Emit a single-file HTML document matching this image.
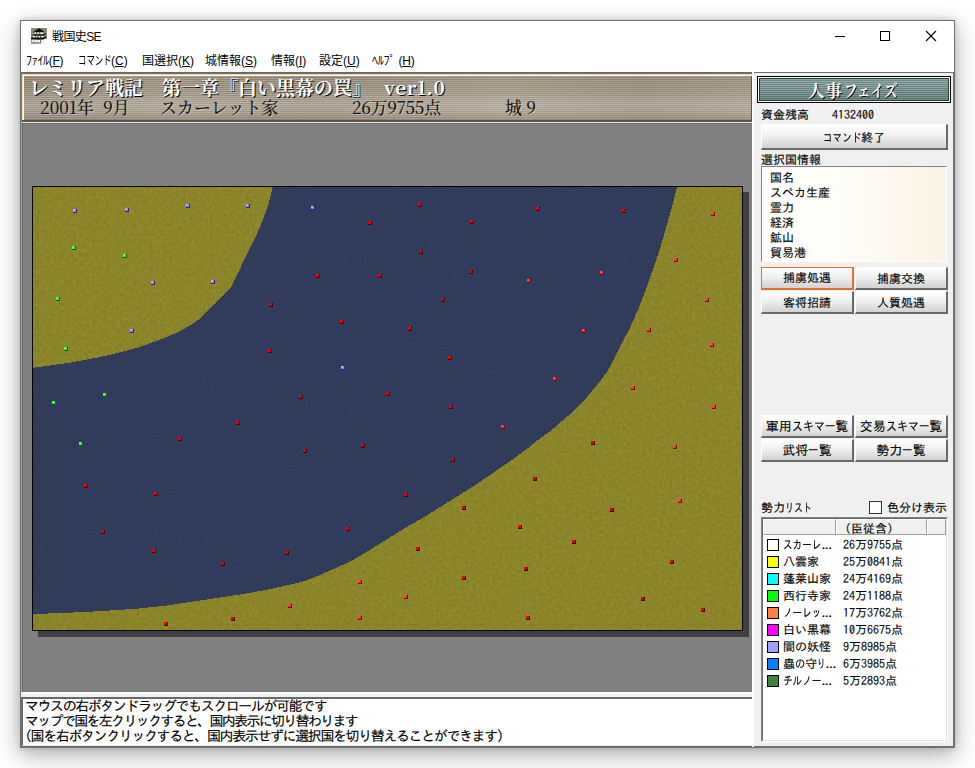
<!DOCTYPE html>
<html lang="ja">
<head>
<meta charset="utf-8">
<title>戦国史SE</title>
<style>
html,body{margin:0;padding:0;background:#fff;}
body{width:975px;height:768px;position:relative;overflow:hidden;font-family:"Liberation Sans","IPAGothic","Noto Sans CJK JP",sans-serif;font-size:12px;color:#000;}
.abs{position:absolute;white-space:nowrap;}
#win{position:absolute;left:20px;top:20px;width:935px;height:728px;background:#fff;box-sizing:border-box;
  box-shadow:0 0 0 1px rgba(90,90,90,0.0), 0 7px 22px 1px rgba(0,0,0,0.30), 0 0 7px rgba(0,0,0,0.16);}
#wborder{position:absolute;left:20px;top:20px;width:935px;height:728px;box-sizing:border-box;border:1px solid #707070;pointer-events:none;}
#title{left:52px;top:29px;letter-spacing:-0.6px;font-size:12px;line-height:16px;font-family:"Liberation Sans","Noto Sans CJK JP",sans-serif;}
.menu{top:53px;font-size:12px;line-height:16px;font-family:"Liberation Sans","Noto Sans CJK JP",sans-serif;}
.menu u{text-decoration:underline;text-underline-offset:1px;}
#client{position:absolute;left:21px;top:72px;width:933px;height:675px;background:#f0f0f0;box-sizing:border-box;border-top:1px solid #6e6e6e;border-right:1px solid #6e6e6e;border-bottom:1px solid #6e6e6e;}
#grey{position:absolute;left:21px;top:123px;width:731px;height:569px;background:#808080;box-sizing:border-box;border-top:1px solid #6e6e6e;border-left:1px solid #a0a0a0;box-shadow:inset 1px 0 0 #696969;}
#hdr{position:absolute;left:21px;top:72px;width:732px;height:51px;box-sizing:border-box;overflow:hidden;
  border-top:2px solid #6e6a66;border-bottom:1px solid #e4e4e4;border-left:1px solid #8a8070;background:#5c5248;}
#hdr .tex{position:absolute;left:2px;top:2px;right:2px;height:44px;
  background:linear-gradient(to bottom,rgba(80,60,40,0.10) 0%,rgba(80,60,40,0.04) 35%,rgba(255,255,250,0.14) 62%,rgba(255,255,250,0.10) 80%,rgba(60,40,30,0.12) 100%),
  linear-gradient(to right,rgba(255,250,240,0) 0%,rgba(255,250,240,0.10) 20%,rgba(255,250,240,0.02) 38%,rgba(255,250,240,0.14) 66%,rgba(255,250,240,0.03) 85%,rgba(255,250,240,0.10) 100%),
  repeating-linear-gradient(to bottom,#aea292 0,#aea292 1px,#8f8575 1px,#8f8575 2px);}
#hdr .hl{position:absolute;left:0;top:0;right:0;height:2px;background:linear-gradient(to bottom,#f3d9b3 0,#f3d9b3 1px,#fff6ea 1px,#fff6ea 2px);}
#hdr .hl2{position:absolute;left:0;top:0;width:2px;height:46px;background:linear-gradient(to right,#f3d9b3 0,#f3d9b3 1px,#fff6ea 1px,#fff6ea 2px);}
#hdr .l1{left:7px;top:2px;font-family:"Noto Serif CJK JP","Noto Serif CJK SC",serif;font-weight:700;font-size:19px;line-height:22px;color:#fff;text-shadow:1px 1px 0 #000;}
#hdr .l2{top:23px;font-family:"Noto Serif CJK JP","Noto Serif CJK SC",serif;font-weight:500;font-size:17px;line-height:20px;color:#141210;text-shadow:1px 1px 0 rgba(255,240,220,0.35);}
#mapbox{position:absolute;left:32px;top:186px;width:711px;height:445px;box-sizing:border-box;border:1px solid #000;box-shadow:6px 6px 0 #404040;background:#8a8626;}
#mapbox svg{display:block;}
#msg{position:absolute;left:21px;top:697px;width:732px;height:49px;box-sizing:border-box;background:#fff;border-top:2px solid #696969;border-left:2px solid #696969;border-bottom:1px solid #e3e3e3;border-right:1px solid #e3e3e3;}
#msg div{left:2px;font-family:"IPAGothic","Noto Sans CJK JP",sans-serif;font-size:14px;line-height:15px;}
.g,.btn,#msg div{-webkit-text-stroke:0.12px #000;}
.g{font-family:"IPAGothic","Noto Sans CJK JP",sans-serif;font-size:12px;line-height:13px;}
.btn{position:absolute;box-sizing:border-box;background:linear-gradient(to bottom,#ffffff 0%,#f0f0f0 45%,#d2d2d2 100%);
  border-top:1px solid #fff;border-left:1px solid #fff;border-right:2px solid #696969;border-bottom:2px solid #696969;
  text-align:center;font-family:"IPAGothic","Noto Sans CJK JP",sans-serif;font-size:13px;white-space:nowrap;}
.btn.sm{font-size:12px;}
.btn.foc{border:1px solid #e07030;border-right:2px solid #e07030;border-bottom:2px solid #e07030;}
.ph{font-family:"Noto Serif CJK JP","Noto Serif CJK SC",serif;font-weight:700;font-size:17px;line-height:21px;color:#fff;text-shadow:1px 1px 0 #000;}
.hc{position:absolute;top:1px;height:16px;box-sizing:border-box;background:#f0f0f0;border-top:1px solid #fff;border-left:1px solid #fff;border-right:1px solid #a0a0a0;border-bottom:1px solid #a0a0a0;}
.sq{position:absolute;left:5px;width:12px;height:12px;box-sizing:border-box;border:1px solid #000;}
.k{display:inline-block;transform-origin:0 50%;}
</style>
</head>
<body>
<div id="win"></div>
<!-- title bar -->
<svg class="abs" style="left:31px;top:28px" width="16" height="16" viewBox="0 0 16 16">
<defs><linearGradient id="ig" x1="0" y1="0" x2="1" y2="0"><stop offset="0" stop-color="#9c9c9c"/><stop offset="0.55" stop-color="#e6e6e6"/><stop offset="1" stop-color="#ffffff"/></linearGradient>
<linearGradient id="ig2" x1="0" y1="0" x2="1" y2="1"><stop offset="0" stop-color="#8c8474"/><stop offset="0.7" stop-color="#8c8474"/><stop offset="1" stop-color="#d8d4cc"/></linearGradient></defs>
<rect width="16" height="16" fill="url(#ig2)"/>
<rect x="0" y="11" width="16" height="5" fill="url(#ig)"/>
<polygon points="8.4,0.2 13,3.6 12.6,4.4 3,4.4 2.8,3.6" fill="#0c0c0c"/>
<rect x="3.4" y="4.4" width="8.8" height="1.9" fill="#f2f2f2"/>
<rect x="5.4" y="4.4" width="0.8" height="1.9" fill="#333"/><rect x="8.3" y="4.4" width="0.8" height="1.9" fill="#333"/>
<polygon points="1.8,7.7 2,6.7 3.6,6.2 12.2,6.2 14.8,5 14.4,6.6 12.2,7.9" fill="#0c0c0c"/>
<rect x="2" y="7.8" width="10.6" height="2" fill="#f2f2f2"/>
<rect x="4.3" y="7.8" width="0.7" height="2" fill="#333"/><rect x="6.4" y="7.8" width="0.9" height="2" fill="#222"/><rect x="9" y="7.8" width="0.8" height="2" fill="#333"/>
<polygon points="0,11.2 0,9.8 1.6,9.4 12.6,9.6 15.8,8 15.2,9.8 12.4,11.6 6,11.8" fill="#0c0c0c"/>
<rect x="1" y="11.8" width="1.6" height="2" fill="#f4f4f4"/><rect x="3.4" y="11.8" width="2.4" height="2" fill="#f4f4f4"/><rect x="6.8" y="12" width="2.4" height="1.8" fill="#fafafa"/>
<rect x="0" y="14" width="10" height="2" fill="#8e8e8e" opacity="0.7"/>
<rect x="9.4" y="11.6" width="0.6" height="3" fill="#222"/>
</svg>
<div id="title" class="abs">戦国史SE</div>
<svg class="abs" style="left:830px;top:26px" width="112" height="20" viewBox="0 0 112 20" shape-rendering="crispEdges">
<rect x="5" y="10" width="10" height="1" fill="#000"/>
<rect x="50.5" y="5.5" width="9" height="9" fill="none" stroke="#000" stroke-width="1"/>
<g shape-rendering="auto" stroke="#000" stroke-width="1.1"><line x1="96" y1="5" x2="106" y2="15"/><line x1="106" y1="5" x2="96" y2="15"/></g>
</svg>
<!-- menu -->
<div class="abs menu" style="left:26px;letter-spacing:-0.3px">ﾌｧｲﾙ(<u>F</u>)</div>
<div class="abs menu" style="left:78px"><span style="display:inline-block;transform:scaleX(0.70);transform-origin:0 50%;">コマンド</span></div><div class="abs menu" style="left:111px">(<u>C</u>)</div>
<div class="abs menu" style="left:142px">国選択(<u>K</u>)</div>
<div class="abs menu" style="left:205px">城情報(<u>S</u>)</div>
<div class="abs menu" style="left:271px">情報(<u>I</u>)</div>
<div class="abs menu" style="left:319px">設定(<u>U</u>)</div>
<div class="abs menu" style="left:372px;letter-spacing:-0.2px">ﾍﾙﾌﾟ (<u>H</u>)</div>

<div id="client"></div>
<div id="grey"></div><div class="abs" style="left:21px;top:692px;width:733px;height:2px;background:#fafafa"></div>
<div id="hdr"><div class="tex"></div><div class="hl"></div><div class="hl2"></div>
  <div class="abs l1">レミリア戦記　第一章『白い黒幕の罠』</div><div class="abs l1" style="left:362px;letter-spacing:0.7px">ver1.0</div>
  <div class="abs l2" style="left:18px">2001年</div><div class="abs l2" style="left:81px">9月</div>
  <div class="abs l2" style="left:138px">スカーレット家</div>
  <div class="abs l2" style="left:330px;letter-spacing:-0.4px">26万9755点</div>
  <div class="abs l2" style="left:483px">城 9</div>
</div>
<div id="mapbox"><svg class="map" width="709" height="443" viewBox="0 0 709 443" shape-rendering="crispEdges">
<defs>
<filter id="nz" color-interpolation-filters="sRGB" x="0" y="0" width="100%" height="100%"><feTurbulence type="fractalNoise" baseFrequency="0.55" numOctaves="1" seed="3" result="t"/><feColorMatrix in="t" type="matrix" values="0 0 0 0 0.36  0 0 0 0 0.55  0 0 0 0 0.20  5 0 0 0 -3.15"/></filter>
<filter id="nz2" color-interpolation-filters="sRGB" x="0" y="0" width="100%" height="100%"><feTurbulence type="fractalNoise" baseFrequency="0.45" numOctaves="2" seed="8" result="t"/><feColorMatrix in="t" type="matrix" values="0 0 0 0 1  0 0 0 0 1  0 0 0 0 1  1.2 0 0 0 -0.5"/></filter>
<filter id="nz3" color-interpolation-filters="sRGB" x="0" y="0" width="100%" height="100%"><feTurbulence type="fractalNoise" baseFrequency="0.32" numOctaves="2" seed="11" result="t"/><feColorMatrix in="t" type="matrix" values="0 0 0 0 0.68  0 0 0 0 0.62  0 0 0 0 0.24  0 2.2 0 0 -0.85"/></filter>
<filter id="nz4" color-interpolation-filters="sRGB" x="0" y="0" width="100%" height="100%"><feTurbulence type="fractalNoise" baseFrequency="0.3" numOctaves="2" seed="29" result="t"/><feColorMatrix in="t" type="matrix" values="0 0 0 0 0.45  0 0 0 0 0.38  0 0 0 0 0.10  0 0 2.2 0 -0.85"/></filter>
<clipPath id="sea"><polygon points="239.9,0.0 235.1,18.8 228.7,36.0 221.2,53.1 213.6,68.2 205.1,85.4 197.5,101.5 185.7,113.3 175.0,124.0 164.2,133.7 157.0,138.6 144.7,145.2 131.6,150.9 118.4,155.8 105.3,160.4 92.2,164.0 79.0,167.3 65.9,170.3 52.8,172.7 39.7,175.2 26.5,177.2 13.4,179.1 0.0,180.8 0.0,427.0 23.7,426.2 50.3,425.1 77.0,423.5 103.7,421.7 130.3,419.0 157.0,415.0 183.7,411.0 210.3,407.0 237.0,402.2 257.0,397.7 270.0,394.5 283.1,389.6 296.2,383.9 309.4,378.1 320.8,372.4 332.3,365.8 345.5,357.6 358.6,349.4 371.7,341.2 376.8,338.2 390.0,330.8 403.1,322.6 416.2,314.4 429.4,306.2 442.5,298.0 455.6,288.9 468.7,279.9 481.9,270.9 495.0,261.0 506.5,251.8 518.3,243.3 529.8,233.4 540.5,224.4 549.5,215.4 557.7,205.5 565.9,195.7 574.1,185.0 579.9,174.3 585.6,162.8 588.8,156.5 596.8,141.2 605.4,121.9 612.9,102.5 620.4,81.1 626.9,61.7 633.3,40.2 638.7,20.9 644.1,0.0"/></clipPath>
</defs>
<rect width="709" height="443" fill="#8c8629"/>
<rect width="709" height="443" filter="url(#nz3)" opacity="0.32"/><rect width="709" height="443" filter="url(#nz4)" opacity="0.30"/><rect width="709" height="443" filter="url(#nz)" opacity="0.6"/>
<polygon points="239.9,0.0 235.1,18.8 228.7,36.0 221.2,53.1 213.6,68.2 205.1,85.4 197.5,101.5 185.7,113.3 175.0,124.0 164.2,133.7 157.0,138.6 144.7,145.2 131.6,150.9 118.4,155.8 105.3,160.4 92.2,164.0 79.0,167.3 65.9,170.3 52.8,172.7 39.7,175.2 26.5,177.2 13.4,179.1 0.0,180.8 0.0,427.0 23.7,426.2 50.3,425.1 77.0,423.5 103.7,421.7 130.3,419.0 157.0,415.0 183.7,411.0 210.3,407.0 237.0,402.2 257.0,397.7 270.0,394.5 283.1,389.6 296.2,383.9 309.4,378.1 320.8,372.4 332.3,365.8 345.5,357.6 358.6,349.4 371.7,341.2 376.8,338.2 390.0,330.8 403.1,322.6 416.2,314.4 429.4,306.2 442.5,298.0 455.6,288.9 468.7,279.9 481.9,270.9 495.0,261.0 506.5,251.8 518.3,243.3 529.8,233.4 540.5,224.4 549.5,215.4 557.7,205.5 565.9,195.7 574.1,185.0 579.9,174.3 585.6,162.8 588.8,156.5 596.8,141.2 605.4,121.9 612.9,102.5 620.4,81.1 626.9,61.7 633.3,40.2 638.7,20.9 644.1,0.0" fill="#303a5b" shape-rendering="crispEdges"/><g clip-path="url(#sea)"><rect width="709" height="443" filter="url(#nz2)" opacity="0.06"/></g>
<rect x="40" y="22" width="4" height="4" fill="#242488"/><rect x="40" y="22" width="3" height="3" fill="#8484f8"/><rect x="40" y="22" width="2" height="2" fill="#b4b4ff"/><rect x="92" y="21" width="4" height="4" fill="#242488"/><rect x="92" y="21" width="3" height="3" fill="#8484f8"/><rect x="92" y="21" width="2" height="2" fill="#b4b4ff"/><rect x="153" y="17" width="4" height="4" fill="#242488"/><rect x="153" y="17" width="3" height="3" fill="#8484f8"/><rect x="153" y="17" width="2" height="2" fill="#b4b4ff"/><rect x="213" y="17" width="4" height="4" fill="#242488"/><rect x="213" y="17" width="3" height="3" fill="#8484f8"/><rect x="213" y="17" width="2" height="2" fill="#b4b4ff"/><rect x="118" y="94" width="4" height="4" fill="#242488"/><rect x="118" y="94" width="3" height="3" fill="#8484f8"/><rect x="118" y="94" width="2" height="2" fill="#b4b4ff"/><rect x="178" y="93" width="4" height="4" fill="#242488"/><rect x="178" y="93" width="3" height="3" fill="#8484f8"/><rect x="178" y="93" width="2" height="2" fill="#b4b4ff"/><rect x="97" y="142" width="4" height="4" fill="#242488"/><rect x="97" y="142" width="3" height="3" fill="#8484f8"/><rect x="97" y="142" width="2" height="2" fill="#b4b4ff"/><rect x="278" y="19" width="4" height="4" fill="#242488"/><rect x="278" y="19" width="3" height="3" fill="#8484f8"/><rect x="278" y="19" width="2" height="2" fill="#b4b4ff"/><rect x="308" y="179" width="4" height="4" fill="#242488"/><rect x="308" y="179" width="3" height="3" fill="#8484f8"/><rect x="308" y="179" width="2" height="2" fill="#b4b4ff"/><rect x="39" y="59" width="4" height="4" fill="#0c5a0c"/><rect x="39" y="59" width="3" height="3" fill="#30f030"/><rect x="39" y="59" width="2" height="2" fill="#58ff58"/><rect x="90" y="67" width="4" height="4" fill="#0c5a0c"/><rect x="90" y="67" width="3" height="3" fill="#30f030"/><rect x="90" y="67" width="2" height="2" fill="#58ff58"/><rect x="23" y="110" width="4" height="4" fill="#0c5a0c"/><rect x="23" y="110" width="3" height="3" fill="#30f030"/><rect x="23" y="110" width="2" height="2" fill="#58ff58"/><rect x="31" y="160" width="4" height="4" fill="#0c5a0c"/><rect x="31" y="160" width="3" height="3" fill="#30f030"/><rect x="31" y="160" width="2" height="2" fill="#58ff58"/><rect x="19" y="214" width="4" height="4" fill="#0c5a0c"/><rect x="19" y="214" width="3" height="3" fill="#30f030"/><rect x="19" y="214" width="2" height="2" fill="#58ff58"/><rect x="70" y="206" width="4" height="4" fill="#0c5a0c"/><rect x="70" y="206" width="3" height="3" fill="#30f030"/><rect x="70" y="206" width="2" height="2" fill="#58ff58"/><rect x="46" y="255" width="4" height="4" fill="#0c5a0c"/><rect x="46" y="255" width="3" height="3" fill="#30f030"/><rect x="46" y="255" width="2" height="2" fill="#58ff58"/><rect x="236" y="116" width="4" height="4" fill="#4a0000"/><rect x="236" y="116" width="3" height="3" fill="#c80000"/><rect x="236" y="116" width="2" height="2" fill="#f00000"/><rect x="235" y="162" width="4" height="4" fill="#4a0000"/><rect x="235" y="162" width="3" height="3" fill="#c80000"/><rect x="235" y="162" width="2" height="2" fill="#f00000"/><rect x="385" y="16" width="4" height="4" fill="#4a0000"/><rect x="385" y="16" width="3" height="3" fill="#c80000"/><rect x="385" y="16" width="2" height="2" fill="#f00000"/><rect x="335" y="34" width="4" height="4" fill="#4a0000"/><rect x="335" y="34" width="3" height="3" fill="#c80000"/><rect x="335" y="34" width="2" height="2" fill="#f00000"/><rect x="437" y="33" width="4" height="4" fill="#4a0000"/><rect x="437" y="33" width="3" height="3" fill="#c80000"/><rect x="437" y="33" width="2" height="2" fill="#f00000"/><rect x="386" y="63" width="4" height="4" fill="#4a0000"/><rect x="386" y="63" width="3" height="3" fill="#c80000"/><rect x="386" y="63" width="2" height="2" fill="#f00000"/><rect x="283" y="87" width="4" height="4" fill="#4a0000"/><rect x="283" y="87" width="3" height="3" fill="#c80000"/><rect x="283" y="87" width="2" height="2" fill="#f00000"/><rect x="345" y="87" width="4" height="4" fill="#4a0000"/><rect x="345" y="87" width="3" height="3" fill="#c80000"/><rect x="345" y="87" width="2" height="2" fill="#f00000"/><rect x="436" y="83" width="4" height="4" fill="#4a0000"/><rect x="436" y="83" width="3" height="3" fill="#c80000"/><rect x="436" y="83" width="2" height="2" fill="#f00000"/><rect x="408" y="111" width="4" height="4" fill="#4a0000"/><rect x="408" y="111" width="3" height="3" fill="#c80000"/><rect x="408" y="111" width="2" height="2" fill="#f00000"/><rect x="307" y="133" width="4" height="4" fill="#4a0000"/><rect x="307" y="133" width="3" height="3" fill="#c80000"/><rect x="307" y="133" width="2" height="2" fill="#f00000"/><rect x="375" y="140" width="4" height="4" fill="#4a0000"/><rect x="375" y="140" width="3" height="3" fill="#c80000"/><rect x="375" y="140" width="2" height="2" fill="#f00000"/><rect x="415" y="169" width="4" height="4" fill="#4a0000"/><rect x="415" y="169" width="3" height="3" fill="#c80000"/><rect x="415" y="169" width="2" height="2" fill="#f00000"/><rect x="503" y="20" width="4" height="4" fill="#4a0000"/><rect x="503" y="20" width="3" height="3" fill="#c80000"/><rect x="503" y="20" width="2" height="2" fill="#f00000"/><rect x="589" y="22" width="4" height="4" fill="#4a0000"/><rect x="589" y="22" width="3" height="3" fill="#c80000"/><rect x="589" y="22" width="2" height="2" fill="#f00000"/><rect x="203" y="234" width="4" height="4" fill="#4a0000"/><rect x="203" y="234" width="3" height="3" fill="#c80000"/><rect x="203" y="234" width="2" height="2" fill="#f00000"/><rect x="145" y="250" width="4" height="4" fill="#4a0000"/><rect x="145" y="250" width="3" height="3" fill="#c80000"/><rect x="145" y="250" width="2" height="2" fill="#f00000"/><rect x="51" y="297" width="4" height="4" fill="#4a0000"/><rect x="51" y="297" width="3" height="3" fill="#c80000"/><rect x="51" y="297" width="2" height="2" fill="#f00000"/><rect x="121" y="305" width="4" height="4" fill="#4a0000"/><rect x="121" y="305" width="3" height="3" fill="#c80000"/><rect x="121" y="305" width="2" height="2" fill="#f00000"/><rect x="68" y="343" width="4" height="4" fill="#4a0000"/><rect x="68" y="343" width="3" height="3" fill="#c80000"/><rect x="68" y="343" width="2" height="2" fill="#f00000"/><rect x="119" y="362" width="4" height="4" fill="#4a0000"/><rect x="119" y="362" width="3" height="3" fill="#c80000"/><rect x="119" y="362" width="2" height="2" fill="#f00000"/><rect x="188" y="375" width="4" height="4" fill="#4a0000"/><rect x="188" y="375" width="3" height="3" fill="#c80000"/><rect x="188" y="375" width="2" height="2" fill="#f00000"/><rect x="252" y="364" width="4" height="4" fill="#4a0000"/><rect x="252" y="364" width="3" height="3" fill="#c80000"/><rect x="252" y="364" width="2" height="2" fill="#f00000"/><rect x="266" y="208" width="4" height="4" fill="#4a0000"/><rect x="266" y="208" width="3" height="3" fill="#c80000"/><rect x="266" y="208" width="2" height="2" fill="#f00000"/><rect x="353" y="205" width="4" height="4" fill="#4a0000"/><rect x="353" y="205" width="3" height="3" fill="#c80000"/><rect x="353" y="205" width="2" height="2" fill="#f00000"/><rect x="416" y="218" width="4" height="4" fill="#4a0000"/><rect x="416" y="218" width="3" height="3" fill="#c80000"/><rect x="416" y="218" width="2" height="2" fill="#f00000"/><rect x="270" y="262" width="4" height="4" fill="#4a0000"/><rect x="270" y="262" width="3" height="3" fill="#c80000"/><rect x="270" y="262" width="2" height="2" fill="#f00000"/><rect x="328" y="257" width="4" height="4" fill="#4a0000"/><rect x="328" y="257" width="3" height="3" fill="#c80000"/><rect x="328" y="257" width="2" height="2" fill="#f00000"/><rect x="418" y="271" width="4" height="4" fill="#4a0000"/><rect x="418" y="271" width="3" height="3" fill="#c80000"/><rect x="418" y="271" width="2" height="2" fill="#f00000"/><rect x="371" y="306" width="4" height="4" fill="#4a0000"/><rect x="371" y="306" width="3" height="3" fill="#c80000"/><rect x="371" y="306" width="2" height="2" fill="#f00000"/><rect x="429" y="319" width="4" height="4" fill="#4a0000"/><rect x="429" y="319" width="3" height="3" fill="#c80000"/><rect x="429" y="319" width="2" height="2" fill="#f00000"/><rect x="485" y="338" width="4" height="4" fill="#4a0000"/><rect x="485" y="338" width="3" height="3" fill="#c80000"/><rect x="485" y="338" width="2" height="2" fill="#f00000"/><rect x="313" y="340" width="4" height="4" fill="#4a0000"/><rect x="313" y="340" width="3" height="3" fill="#c80000"/><rect x="313" y="340" width="2" height="2" fill="#f00000"/><rect x="383" y="360" width="4" height="4" fill="#4a0000"/><rect x="383" y="360" width="3" height="3" fill="#c80000"/><rect x="383" y="360" width="2" height="2" fill="#f00000"/><rect x="491" y="380" width="4" height="4" fill="#4a0000"/><rect x="491" y="380" width="3" height="3" fill="#c80000"/><rect x="491" y="380" width="2" height="2" fill="#f00000"/><rect x="558" y="254" width="4" height="4" fill="#4a0000"/><rect x="558" y="254" width="3" height="3" fill="#c80000"/><rect x="558" y="254" width="2" height="2" fill="#f00000"/><rect x="500" y="290" width="4" height="4" fill="#4a0000"/><rect x="500" y="290" width="3" height="3" fill="#c80000"/><rect x="500" y="290" width="2" height="2" fill="#f00000"/><rect x="577" y="321" width="4" height="4" fill="#4a0000"/><rect x="577" y="321" width="3" height="3" fill="#c80000"/><rect x="577" y="321" width="2" height="2" fill="#f00000"/><rect x="539" y="353" width="4" height="4" fill="#4a0000"/><rect x="539" y="353" width="3" height="3" fill="#c80000"/><rect x="539" y="353" width="2" height="2" fill="#f00000"/><rect x="637" y="373" width="4" height="4" fill="#4a0000"/><rect x="637" y="373" width="3" height="3" fill="#c80000"/><rect x="637" y="373" width="2" height="2" fill="#f00000"/><rect x="131" y="435" width="4" height="4" fill="#4a0000"/><rect x="131" y="435" width="3" height="3" fill="#c80000"/><rect x="131" y="435" width="2" height="2" fill="#f00000"/><rect x="198" y="430" width="4" height="4" fill="#4a0000"/><rect x="198" y="430" width="3" height="3" fill="#c80000"/><rect x="198" y="430" width="2" height="2" fill="#f00000"/><rect x="429" y="389" width="4" height="4" fill="#4a0000"/><rect x="429" y="389" width="3" height="3" fill="#c80000"/><rect x="429" y="389" width="2" height="2" fill="#f00000"/><rect x="608" y="410" width="4" height="4" fill="#4a0000"/><rect x="608" y="410" width="3" height="3" fill="#c80000"/><rect x="608" y="410" width="2" height="2" fill="#f00000"/><rect x="668" y="421" width="4" height="4" fill="#4a0000"/><rect x="668" y="421" width="3" height="3" fill="#c80000"/><rect x="668" y="421" width="2" height="2" fill="#f00000"/><rect x="493" y="429" width="4" height="4" fill="#4a0000"/><rect x="493" y="429" width="3" height="3" fill="#c80000"/><rect x="493" y="429" width="2" height="2" fill="#f00000"/><rect x="494" y="92" width="4" height="4" fill="#700808"/><rect x="494" y="92" width="3" height="3" fill="#f03030"/><rect x="494" y="92" width="2" height="2" fill="#ff4848"/><rect x="678" y="25" width="4" height="4" fill="#700808"/><rect x="678" y="25" width="3" height="3" fill="#f03030"/><rect x="678" y="25" width="2" height="2" fill="#ff4848"/><rect x="641" y="71" width="4" height="4" fill="#700808"/><rect x="641" y="71" width="3" height="3" fill="#f03030"/><rect x="641" y="71" width="2" height="2" fill="#ff4848"/><rect x="567" y="84" width="4" height="4" fill="#700808"/><rect x="567" y="84" width="3" height="3" fill="#f03030"/><rect x="567" y="84" width="2" height="2" fill="#ff4848"/><rect x="672" y="111" width="4" height="4" fill="#700808"/><rect x="672" y="111" width="3" height="3" fill="#f03030"/><rect x="672" y="111" width="2" height="2" fill="#ff4848"/><rect x="549" y="142" width="4" height="4" fill="#700808"/><rect x="549" y="142" width="3" height="3" fill="#f03030"/><rect x="549" y="142" width="2" height="2" fill="#ff4848"/><rect x="614" y="141" width="4" height="4" fill="#700808"/><rect x="614" y="141" width="3" height="3" fill="#f03030"/><rect x="614" y="141" width="2" height="2" fill="#ff4848"/><rect x="677" y="156" width="4" height="4" fill="#700808"/><rect x="677" y="156" width="3" height="3" fill="#f03030"/><rect x="677" y="156" width="2" height="2" fill="#ff4848"/><rect x="520" y="190" width="4" height="4" fill="#700808"/><rect x="520" y="190" width="3" height="3" fill="#f03030"/><rect x="520" y="190" width="2" height="2" fill="#ff4848"/><rect x="468" y="238" width="4" height="4" fill="#700808"/><rect x="468" y="238" width="3" height="3" fill="#f03030"/><rect x="468" y="238" width="2" height="2" fill="#ff4848"/><rect x="598" y="199" width="4" height="4" fill="#700808"/><rect x="598" y="199" width="3" height="3" fill="#f03030"/><rect x="598" y="199" width="2" height="2" fill="#ff4848"/><rect x="679" y="218" width="4" height="4" fill="#700808"/><rect x="679" y="218" width="3" height="3" fill="#f03030"/><rect x="679" y="218" width="2" height="2" fill="#ff4848"/><rect x="640" y="258" width="4" height="4" fill="#700808"/><rect x="640" y="258" width="3" height="3" fill="#f03030"/><rect x="640" y="258" width="2" height="2" fill="#ff4848"/><rect x="645" y="312" width="4" height="4" fill="#700808"/><rect x="645" y="312" width="3" height="3" fill="#f03030"/><rect x="645" y="312" width="2" height="2" fill="#ff4848"/><rect x="325" y="393" width="4" height="4" fill="#700808"/><rect x="325" y="393" width="3" height="3" fill="#f03030"/><rect x="325" y="393" width="2" height="2" fill="#ff4848"/><rect x="255" y="417" width="4" height="4" fill="#700808"/><rect x="255" y="417" width="3" height="3" fill="#f03030"/><rect x="255" y="417" width="2" height="2" fill="#ff4848"/><rect x="325" y="429" width="4" height="4" fill="#700808"/><rect x="325" y="429" width="3" height="3" fill="#f03030"/><rect x="325" y="429" width="2" height="2" fill="#ff4848"/><rect x="371" y="408" width="4" height="4" fill="#700808"/><rect x="371" y="408" width="3" height="3" fill="#f03030"/><rect x="371" y="408" width="2" height="2" fill="#ff4848"/>
</svg></div>
<div id="msg">
  <div class="abs" style="top:0px;letter-spacing:-1.45px">マウスの右ボタンドラッグでもスクロールが可能です</div>
  <div class="abs" style="top:15px;letter-spacing:-1.7px">マップで国を左クリックすると、国内表示に切り替わります</div>
  <div class="abs" style="top:30px;letter-spacing:-1.4px">(国を右ボタンクリックすると、国内表示せずに選択国を切り替えることができます)</div>
</div>
<div id="rp">
<div class="abs" id="vline" style="left:752px;top:72px;width:2px;height:675px;background:#fff"></div>
<div id="phase" class="abs" style="left:757px;top:76px;width:194px;height:27px;box-sizing:border-box;border:1px solid #000;">
  <div style="position:absolute;left:0;top:0;right:0;bottom:0;border:1px solid #fff;box-sizing:border-box;"></div>
  <div style="position:absolute;left:1px;top:1px;right:1px;bottom:1px;border:1px solid #2a3838;box-sizing:border-box;background:linear-gradient(to bottom,rgba(255,255,255,0.10) 0%,rgba(255,255,255,0.06) 40%,rgba(0,0,0,0.12) 100%),repeating-linear-gradient(to bottom,#849f9d 0,#849f9d 1px,#647f7d 1px,#647f7d 2px);"></div>
  <div class="abs ph" style="left:50px;top:2px;">人事<span class="k" style="transform:scaleX(0.8);margin-left:2px;margin-right:-13.6px">フェイズ</span></div>
</div>
<div class="abs g" style="left:761px;top:108px">資金残高</div>
<div class="abs g" style="left:832px;top:108px">4132400</div>
<div class="btn sm" style="left:761px;top:124px;width:187px;height:26px;line-height:24px;"><span class="k" style="transform:scaleX(0.8);margin-right:-9.6px">コマンド</span>終了</div>
<div class="abs g" style="left:761px;top:153px">選択国情報</div>
<div class="abs" id="info" style="left:761px;top:166px;width:186px;height:96px;box-sizing:border-box;border-top:1px solid #828282;border-left:1px solid #828282;border-right:1px solid #fff;border-bottom:1px solid #fff;background:linear-gradient(to right,#ffffff 0%,#fffdf8 40%,#fbf3e4 100%);">
  <div class="abs g" style="left:8px;top:4px">国名</div>
  <div class="abs g" style="left:8px;top:19px">スペカ生産</div>
  <div class="abs g" style="left:8px;top:34px">霊力</div>
  <div class="abs g" style="left:8px;top:49px">経済</div>
  <div class="abs g" style="left:8px;top:64px">鉱山</div>
  <div class="abs g" style="left:8px;top:79px">貿易港</div>
</div>
<div class="btn sm foc" style="left:761px;top:267px;width:93px;height:23px;line-height:19px;">捕虜処遇</div>
<div class="btn sm" style="left:855px;top:267px;width:93px;height:23px;line-height:20px;">捕虜交換</div>
<div class="btn sm" style="left:761px;top:291px;width:93px;height:23px;line-height:20px;">客将招請</div>
<div class="btn sm" style="left:855px;top:291px;width:93px;height:23px;line-height:20px;">人質処遇</div>

<div class="btn" style="left:761px;top:415px;width:93px;height:23px;line-height:22px;">軍用<span class="k" style="transform:scaleX(0.85);margin-right:-5.9px">スキマ</span><span class="k" style="transform:scaleX(0.8);margin-right:-2.6px">一</span>覧</div>
<div class="btn" style="left:855px;top:415px;width:93px;height:23px;line-height:22px;">交易<span class="k" style="transform:scaleX(0.85);margin-right:-5.9px">スキマ</span><span class="k" style="transform:scaleX(0.8);margin-right:-2.6px">一</span>覧</div>
<div class="btn" style="left:761px;top:439px;width:93px;height:23px;line-height:22px;">武将<span class="k" style="transform:scaleX(0.8);margin-right:-2.6px">一</span>覧</div>
<div class="btn" style="left:855px;top:439px;width:93px;height:23px;line-height:22px;">勢力<span class="k" style="transform:scaleX(0.8);margin-right:-2.6px">一</span>覧</div>

<div class="abs g" style="left:761px;top:501px">勢力<span class="k" style="transform:scaleX(0.75);margin-right:-9.0px">リスト</span></div>
<div class="abs" style="left:869px;top:501px;width:13px;height:13px;box-sizing:border-box;border:1px solid #333;background:#fff"></div>
<div class="abs g" style="left:887px;top:501px">色分け表示</div>

<div class="abs" id="list" style="left:761px;top:517px;width:187px;height:225px;box-sizing:border-box;border-top:1px solid #828282;border-left:1px solid #828282;border-right:1px solid #fff;border-bottom:1px solid #fff;background:#fff;">
 <div style="position:absolute;left:0;top:0;right:0;bottom:0;border-top:1px solid #696969;border-left:1px solid #696969;border-right:1px solid #e3e3e3;border-bottom:1px solid #e3e3e3;"></div>
 <div class="hc" style="left:1px;width:73px"></div>
 <div class="hc" style="left:74px;width:91px"><span class="abs g" style="left:8px;top:2px">(臣従含)</span></div>
 <div class="hc" style="left:165px;width:19px"></div>
 <div class="sq" style="top:21px;background:#ffffff"></div><div class="abs g" style="left:21px;top:20px"><span class="k" style="transform:scaleX(0.8);margin-right:-9.6px">スカーレ</span><span style="letter-spacing:-2.6px">...</span></div><div class="abs g" style="left:81px;top:20px">26万9755点</div>
 <div class="sq" style="top:38px;background:#ffff00"></div><div class="abs g" style="left:21px;top:37px">八雲家</div><div class="abs g" style="left:81px;top:37px">25万0841点</div>
 <div class="sq" style="top:55px;background:#00ffff"></div><div class="abs g" style="left:21px;top:54px">蓬莱山家</div><div class="abs g" style="left:81px;top:54px">24万4169点</div>
 <div class="sq" style="top:72px;background:#00ff00"></div><div class="abs g" style="left:21px;top:71px">西行寺家</div><div class="abs g" style="left:81px;top:71px">24万1188点</div>
 <div class="sq" style="top:89px;background:#ff8040"></div><div class="abs g" style="left:21px;top:88px"><span class="k" style="transform:scaleX(0.8);margin-right:-9.6px">ノーレッ</span><span style="letter-spacing:-2.6px">...</span></div><div class="abs g" style="left:81px;top:88px">17万3762点</div>
 <div class="sq" style="top:106px;background:#ff00ff"></div><div class="abs g" style="left:21px;top:105px">白い黒幕</div><div class="abs g" style="left:81px;top:105px">10万6675点</div>
 <div class="sq" style="top:123px;background:#a0a0ff"></div><div class="abs g" style="left:21px;top:122px">闇の妖怪</div><div class="abs g" style="left:81px;top:122px">9万8985点</div>
 <div class="sq" style="top:140px;background:#0080ff"></div><div class="abs g" style="left:21px;top:139px">蟲<span class="k" style="transform:scaleX(0.85);margin-right:-1.8px">の</span>守<span class="k" style="transform:scaleX(0.7);margin-right:-3.6px">り</span><span style="letter-spacing:-2.6px">...</span></div><div class="abs g" style="left:81px;top:139px">6万3985点</div>
 <div class="sq" style="top:157px;background:#408040"></div><div class="abs g" style="left:21px;top:156px"><span class="k" style="transform:scaleX(0.8);margin-right:-9.6px">チルノー</span><span style="letter-spacing:-2.6px">...</span></div><div class="abs g" style="left:81px;top:156px">5万2893点</div>

</div>
</div>

<div id="wborder"></div>
</body>
</html>
